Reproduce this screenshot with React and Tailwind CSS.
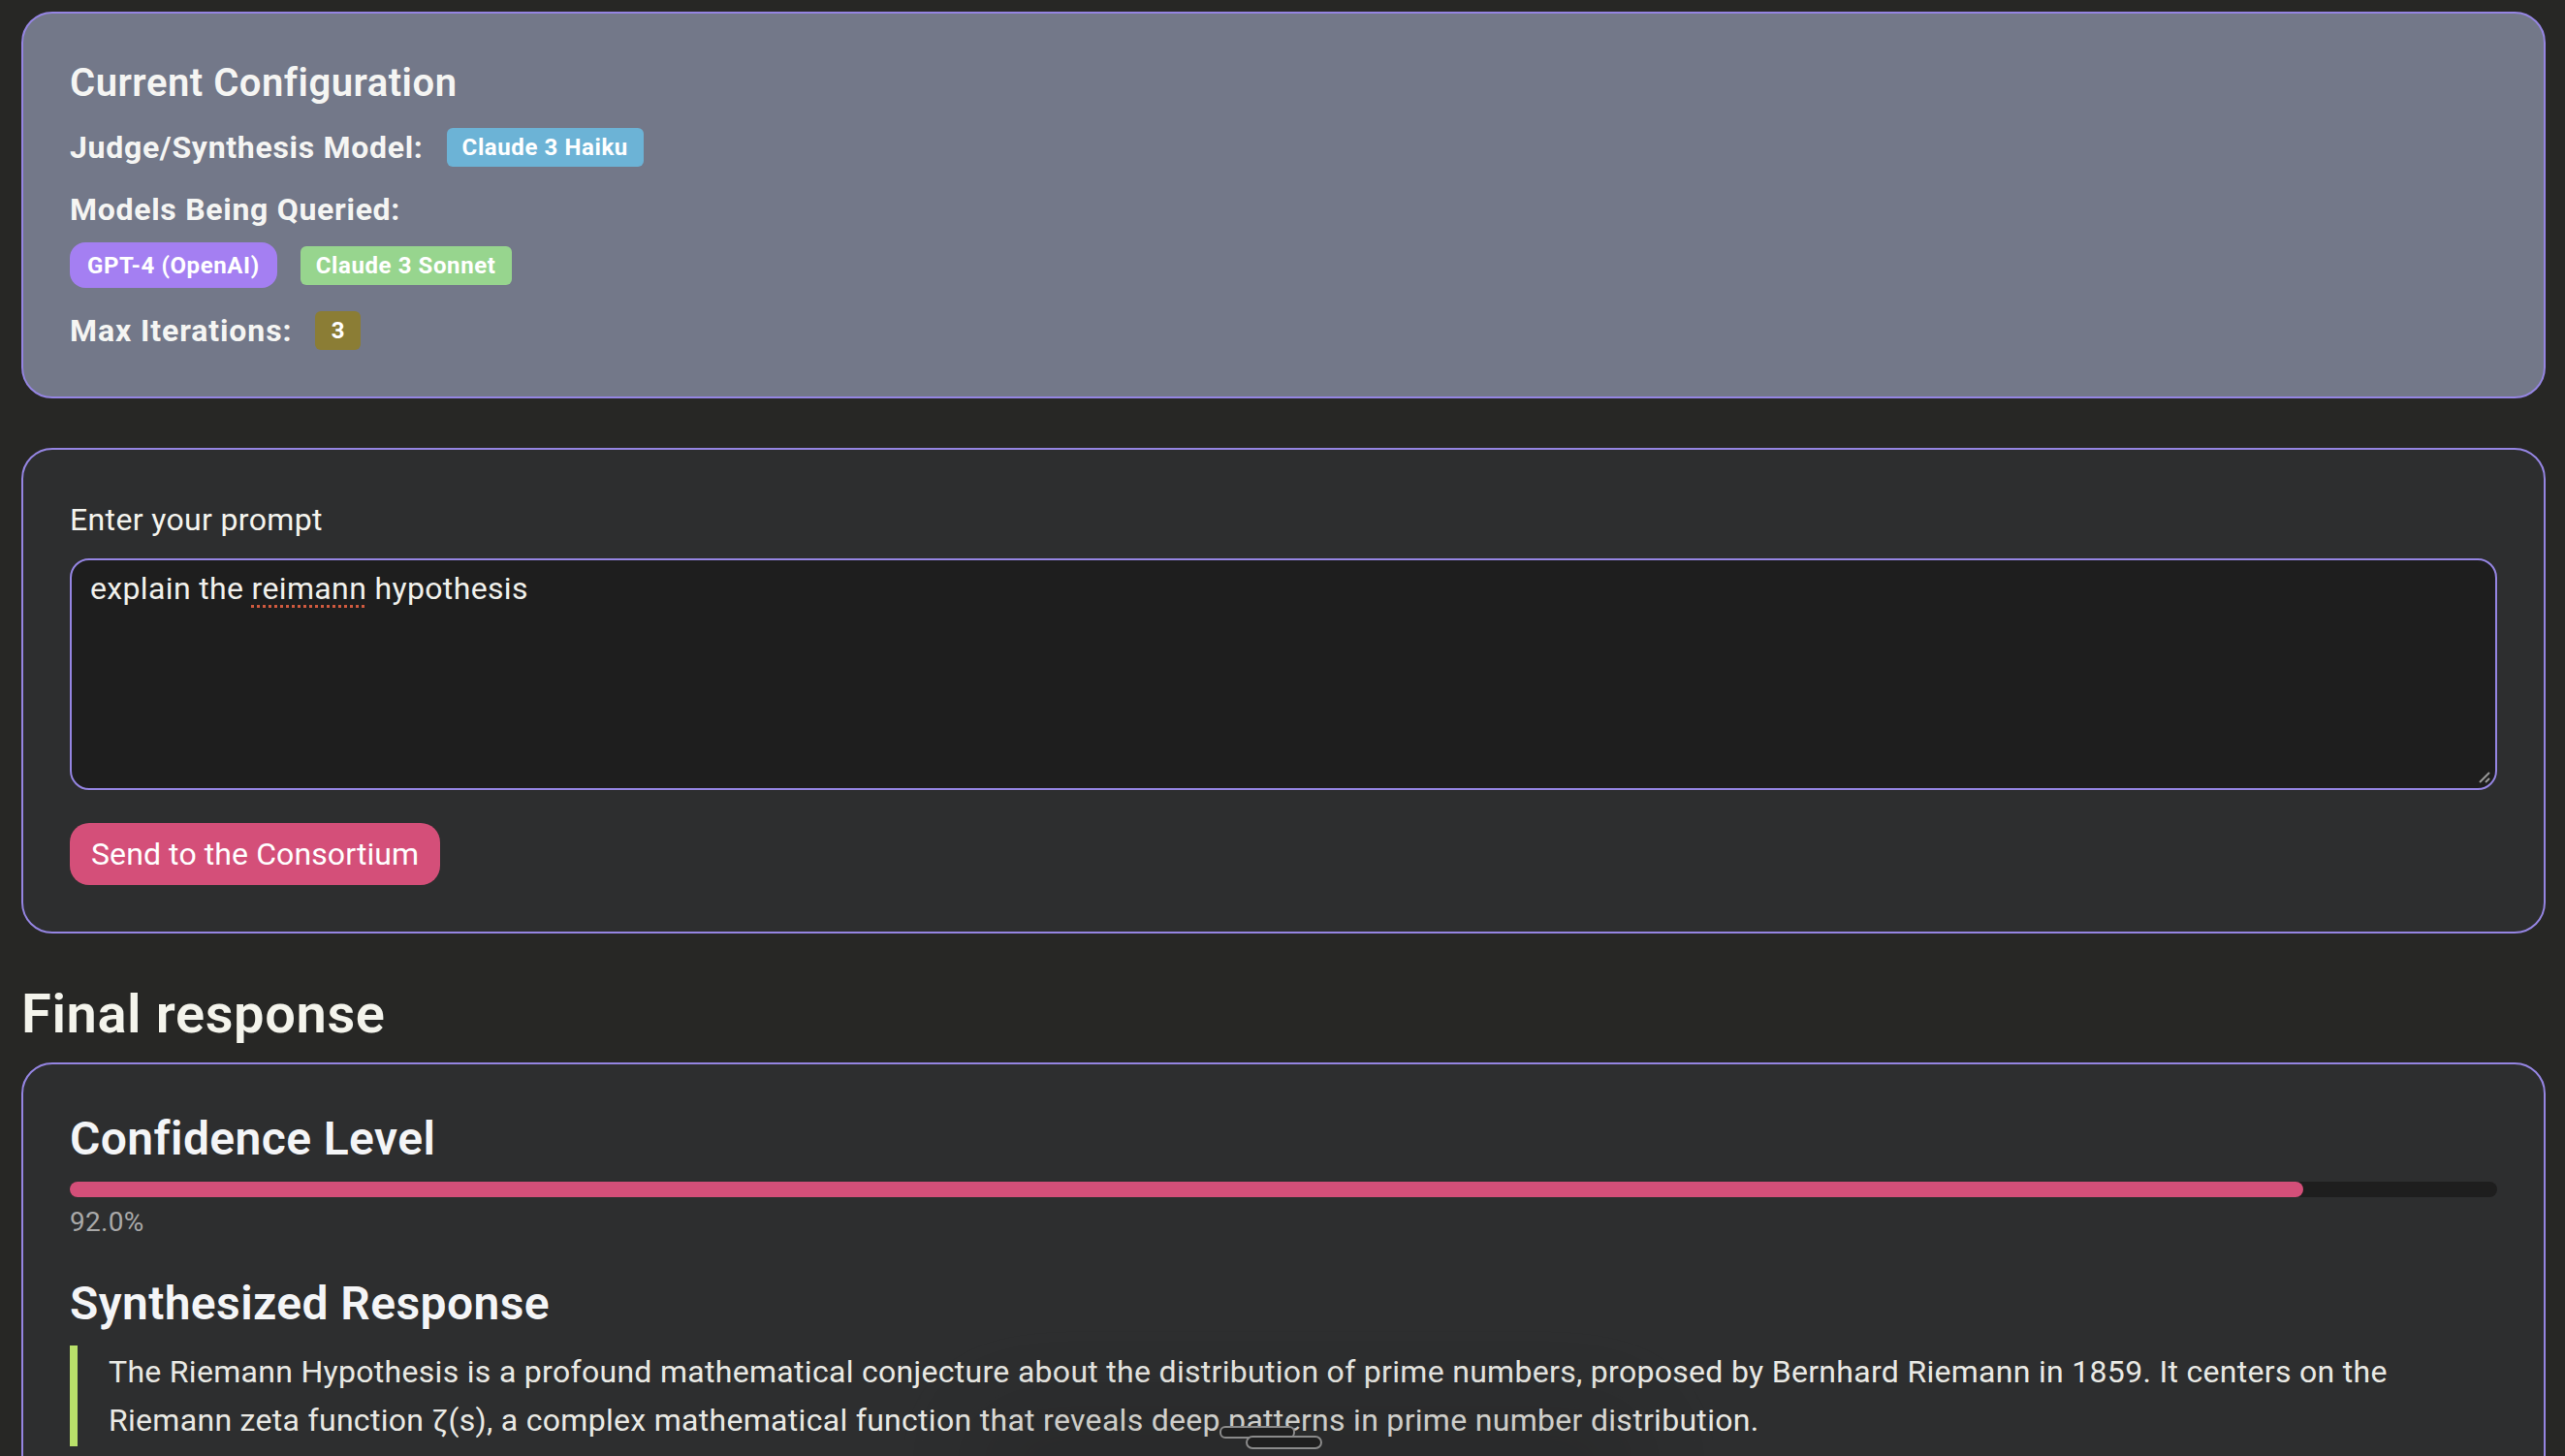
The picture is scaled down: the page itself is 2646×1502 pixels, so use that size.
import React from "react";

const font = { fontFamily: "Roboto, 'Noto Sans', 'Liberation Sans', sans-serif" };

function Badge({ children, className }) {
  return (
    <span
      className={
        "inline-flex items-center justify-center text-[24px] font-bold text-white leading-none tracking-[0.6px] " +
        className
      }
    >
      {children}
    </span>
  );
}

export default function App() {
  return (
    <div
      className="min-h-screen w-full bg-[#272725] pl-[22px] pr-[20px] pt-[12px] pb-[40px] text-[#f4f4ee] relative overflow-hidden"
      style={font}
    >
      {/* Current Configuration */}
      <section className="rounded-[32px] border-2 border-[#9585e2] bg-[#737889] px-[48px] pt-[48px] pb-[48px]">
        <h3 className="text-[40px] leading-[48px] font-semibold tracking-[0.5px] text-[#f5f5f3]">
          Current Configuration
        </h3>
        <div className="mt-[22px] flex items-center gap-[24px] h-[40px]">
          <span className="text-[32px] font-bold tracking-[0.7px] text-[#f5f5f3]">Judge/Synthesis Model:</span>
          <Badge className="h-[40px] px-[16px] rounded-[6px] bg-[#6cb3d6]">Claude 3 Haiku</Badge>
        </div>
        <div className="mt-[24px] text-[32px] leading-[40px] font-bold tracking-[0.7px] text-[#f5f5f3]">
          Models Being Queried:
        </div>
        <div className="mt-[14px] flex items-center gap-[24px]">
          <Badge className="h-[47px] px-[18px] rounded-[16px] bg-[#a47ff2]">GPT-4 (OpenAI)</Badge>
          <Badge className="h-[40px] px-[16px] rounded-[6px] bg-[#97d58e]">Claude 3 Sonnet</Badge>
        </div>
        <div className="mt-[24px] flex items-center gap-[24px] h-[40px]">
          <span className="text-[32px] font-bold tracking-[0.9px] text-[#f5f5f3]">Max Iterations:</span>
          <Badge className="h-[40px] w-[47px] rounded-[6px] bg-[#8b7d35]">3</Badge>
        </div>
      </section>

      {/* Prompt */}
      <section className="mt-[51px] rounded-[32px] border-2 border-[#9585e2] bg-[#2d2e2f] px-[48px] pt-[48px] pb-[48px]">
        <label className="block text-[32px] leading-[48px] tracking-[0.35px] text-[#f4f4ee]">Enter your prompt</label>
        <div className="relative mt-[16px] h-[239px] rounded-[20px] border-2 border-[#9585e2] bg-[#1e1e1e] px-[19px] pt-[5px] text-[32px] leading-normal tracking-[0.35px] text-[#f1f1ec]">
          explain the{" "}
          <span className="underline decoration-dotted decoration-[#cf5a3f] decoration-[3px] underline-offset-[6px]">
            reimann
          </span>{" "}
          hypothesis
          <svg
            className="absolute right-[4px] bottom-[4px]"
            width="16"
            height="16"
            viewBox="0 0 16 16"
          >
            <line x1="14" y1="4" x2="4" y2="14" stroke="#9a9a9a" strokeWidth="2" />
            <line x1="14" y1="10" x2="10" y2="14" stroke="#9a9a9a" strokeWidth="2" />
          </svg>
        </div>
        <button className="mt-[34px] h-[64px] rounded-[20px] bg-[#d44f79] px-[22px] text-[32px] tracking-[0.1px] text-white">
          Send to the Consortium
        </button>
      </section>

      {/* Final response */}
      <h2 className="mt-[50px] text-[56px] leading-[67px] font-semibold tracking-[0.6px] text-[#f4f4ec]">Final response</h2>
      <section className="mt-[16px] rounded-[32px] border-2 border-[#9585e2] bg-[#2d2e2f] px-[48px] pt-[48px] pb-[48px]">
        <h3 className="text-[48px] leading-[57px] font-semibold tracking-[0.4px] text-[#f4f5f7]">Confidence Level</h3>
        <div className="mt-[16px] h-[16px] w-full rounded-full bg-[#1e1e1e]">
          <div className="h-full rounded-full bg-[#d44f79]" style={{ width: "92%" }} />
        </div>
        <div className="mt-[5px] text-[28px] leading-[42px] tracking-[0.3px] text-[#a9a9a9]">92.0%</div>
        <h3 className="mt-[34px] text-[48px] leading-[57px] font-semibold tracking-[0.4px] text-[#f4f5f7]">
          Synthesized Response
        </h3>
        <blockquote className="mt-[15px] border-l-[8px] border-[#b9e06a] pl-[32px] py-[2px] text-[32px] leading-[50px] tracking-[0.3px] text-[#e9e9e4]">
          The Riemann Hypothesis is a profound mathematical conjecture about the distribution of prime
          numbers, proposed by Bernhard Riemann in 1859. It centers on the Riemann zeta function ζ(s), a
          complex mathematical function that reveals deep patterns in prime number distribution.
        </blockquote>
      </section>

      {/* floating scroll indicator overlay */}
      <div className="pointer-events-none absolute left-[1000px] top-[1450px] h-[120px] w-[700px] rounded-full bg-[#1a1a1a] opacity-20 blur-[40px]" />
      <div className="pointer-events-none absolute left-[1258px] top-[1471px] h-[13px] w-[78px] rounded-[6px] border-2 border-[#8a8a8a] bg-[#1f1f1f]" />
      <div className="pointer-events-none absolute left-[1285px] top-[1481px] h-[14px] w-[79px] rounded-[7px] border-2 border-[#8a8a8a] bg-[#1f1f1f]" />
    </div>
  );
}
